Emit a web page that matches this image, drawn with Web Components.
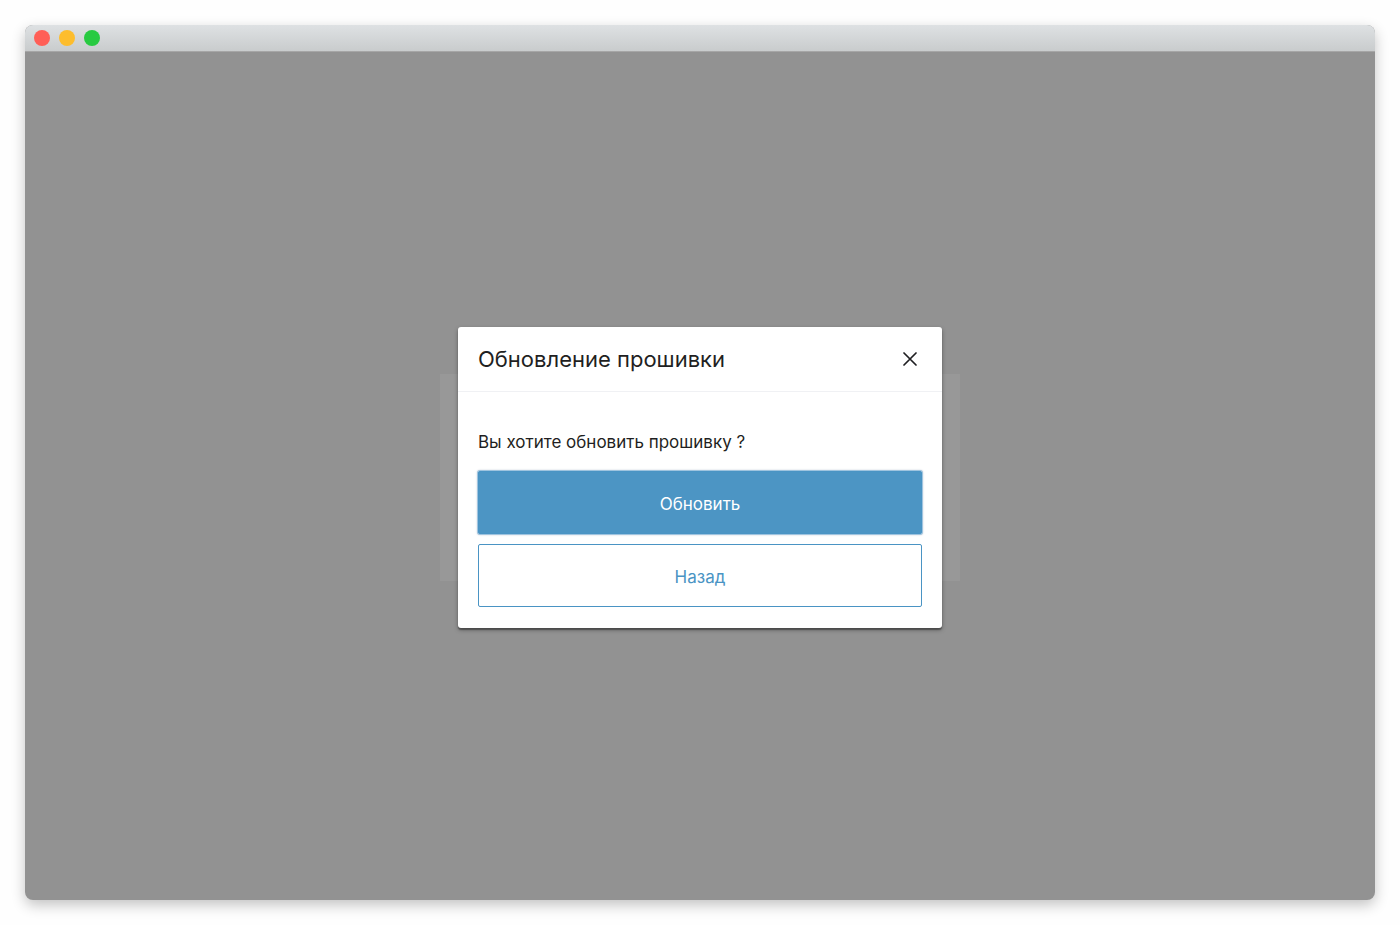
<!DOCTYPE html>
<html lang="ru">
<head>
<meta charset="utf-8">
<title>Обновление прошивки</title>
<style>
  html, body { height: 100%; }
  body {
    margin: 0;
    background: #fefefe;
    color: #1f1f22;
    font-family: Inter, "Noto Sans", sans-serif;
    font-size: 17px;
    line-height: 24px;
  }
</style>
</head>
<body>
<app-window>
  <background-card></background-card>
  <modal-dialog heading="Обновление прошивки">
    <p slot="message">Вы хотите обновить прошивку ?</p>
    <action-button slot="actions" variant="primary">Обновить</action-button>
    <action-button slot="actions" variant="outline">Назад</action-button>
  </modal-dialog>
</app-window>
<script>
class ShadowElement extends HTMLElement {
  constructor() {
    super();
    this.attachShadow({ mode: "open" }).innerHTML = this.constructor.markup;
  }
}

customElements.define("window-controls", class extends ShadowElement {
  static markup = `
    <style>
      :host { display: flex; gap: 9px; }
      span { width: 16px; height: 16px; border-radius: 50%; }
      .close { background: #ff5f57; }
      .minimize { background: #fdbd2d; }
      .zoom { background: #28ca41; }
    </style>
    <span class="close"></span><span class="minimize"></span><span class="zoom"></span>`;
});

customElements.define("app-window", class extends ShadowElement {
  static markup = `
    <style>
      :host { display: flex; box-sizing: border-box; min-height: 100%; padding: 25px; }
      section {
        flex: 1; display: flex; flex-direction: column; overflow: hidden;
        border-radius: 8px; background: #929292;
        box-shadow: 0 5px 14px rgba(0, 0, 0, .24);
      }
      header {
        display: flex; align-items: center; box-sizing: border-box; height: 27px; padding: 0 9px;
        background: linear-gradient(#dee1e3, #c9cccd); border-bottom: 1px solid #a6a6a6;
      }
      main { flex: 1; display: grid; place-items: center; place-content: center; padding-top: 3px; }
      ::slotted(*) { grid-area: 1 / 1; }
    </style>
    <section>
      <header><window-controls></window-controls></header>
      <main><slot></slot></main>
    </section>`;
});

customElements.define("background-card", class extends ShadowElement {
  static markup = `
    <style>:host { display: block; width: 520px; height: 207px; background: #989898; }</style>`;
});

customElements.define("modal-dialog", class extends ShadowElement {
  static markup = `
    <style>
      :host {
        display: block; width: 484px; background: #fff; border-radius: 3px; z-index: 1;
        box-shadow: 0 2px 1px rgba(0, 0, 0, .3), 0 2px 4px rgba(0, 0, 0, .35);
      }
      header {
        display: flex; align-items: center; justify-content: space-between;
        box-sizing: border-box; height: 65px; padding: 0 20px; border-bottom: 1px solid #f0f1f4;
      }
      h1 { margin: 0; font-size: 22px; line-height: 32px; font-weight: 400; }
      button {
        display: grid; place-items: center; width: 24px; height: 24px; padding: 0;
        border: 0; background: none; color: inherit;
      }
      .body { padding: 38px 20px 21px; }
      ::slotted(p) { margin: 0 0 17px; }
      .actions { display: grid; gap: 10px; }
    </style>
    <header>
      <h1></h1>
      <button type="button" aria-label="Закрыть">
        <svg width="14" height="14" viewBox="0 0 14 14" fill="none" stroke="currentColor" stroke-width="1.7" stroke-linecap="round"><path d="M1 1 13 13M13 1 1 13"/></svg>
      </button>
    </header>
    <div class="body">
      <slot name="message"></slot>
      <div class="actions"><slot name="actions"></slot></div>
    </div>`;
  connectedCallback() {
    this.shadowRoot.querySelector("h1").textContent = this.getAttribute("heading");
  }
});

customElements.define("action-button", class extends ShadowElement {
  static markup = `
    <style>
      :host { display: block; }
      button {
        display: block; box-sizing: border-box; width: 100%; height: 63px; padding: 2px 20px 0;
        border: 1px solid #4a94c4; border-radius: 2px; background: #fff; color: #4a94c4;
        font: inherit;
      }
      :host([variant="primary"]) button {
        background: #4c95c4; color: #fff; box-shadow: 0 0 0 1px #9fc4df, 0 0 2px 1px #c5cdd8;
      }
    </style>
    <button type="button"><slot></slot></button>`;
});
</script>
</body>
</html>
